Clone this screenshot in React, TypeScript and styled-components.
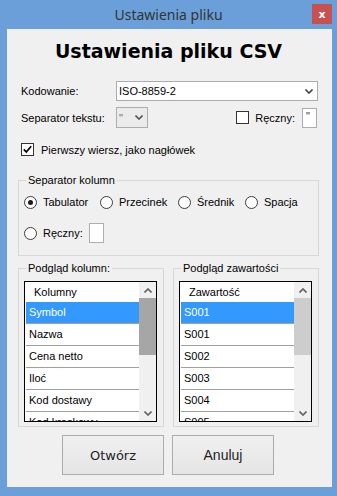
import React from 'react'
import styled, { createGlobalStyle } from 'styled-components'

const GlobalStyle = createGlobalStyle`
  html, body {
    margin: 0;
    padding: 0;
    background: #6b9fd9;
  }
  body {
    font-family: 'Liberation Sans', Arial, sans-serif;
    font-size: 11px;
    color: #000;
  }
`

const Window = styled.div`
  width: 337px;
  height: 496px;
  background: #6b9fd9;
  display: flex;
  flex-direction: column;
  box-sizing: border-box;
`

const TitleBar = styled.div`
  height: 29px;
  display: grid;
  grid-template-columns: 1fr auto 1fr;
  flex: none;
`

const TitleText = styled.div`
  grid-column: 2;
  align-self: center;
  margin-top: -1px;
  font-family: 'Noto Sans', 'Open Sans', sans-serif;
  font-size: 14px;
  color: #333;
`

const CloseButton = styled.div`
  grid-column: 3;
  justify-self: end;
  width: 20px;
  height: 20px;
  margin: 4px 5px 0 0;
  background: #c75050;
  color: #fff;
  display: flex;
  align-items: center;
  justify-content: center;
  font-family: 'DejaVu Sans', sans-serif;
  font-weight: 700;
  font-size: 11px;
  line-height: 1;
`

const Client = styled.div`
  flex: 1;
  margin: 0 5px 9px 7px;
  background: #f0f0f0;
  padding: 0 13px 0 11px;
  display: flex;
  flex-direction: column;
  min-height: 0;
`

const Heading = styled.h1`
  margin: 8px 0 0;
  height: 28px;
  line-height: 28px;
  text-align: center;
  font-family: 'DejaVu Sans', Verdana, sans-serif;
  font-weight: 700;
  font-size: 19px;
`

const FieldRow = styled.div<{ top: number; h: number }>`
  display: flex;
  align-items: center;
  margin-top: ${({ top }) => top}px;
  height: ${({ h }) => h}px;
  flex: none;
`

const FieldLabel = styled.span`
  width: 95px;
  padding-left: 3px;
  flex: none;
`

const Combo = styled.div<{ w: number; disabled?: boolean }>`
  width: ${({ w }) => w}px;
  height: 100%;
  box-sizing: border-box;
  border: 1px solid ${({ disabled }) => (disabled ? '#adadad' : '#abadb3')};
  background: ${({ disabled }) => (disabled ? '#ebebeb' : '#fff')};
  color: ${({ disabled }) => (disabled ? '#6d6d6d' : '#000')};
  display: flex;
  align-items: center;
  padding: 0 4px 0 2px;
  justify-content: space-between;
  flex: none;
`

const Spacer = styled.div<{ w?: number }>`
  flex: ${({ w }) => (w === undefined ? '1' : 'none')};
  width: ${({ w }) => (w === undefined ? 'auto' : `${w}px`)};
`

const CheckBox = styled.span`
  width: 13px;
  height: 13px;
  box-sizing: border-box;
  border: 1px solid #333;
  background: #fff;
  display: inline-flex;
  align-items: center;
  justify-content: center;
  flex: none;
`

const CheckLabel = styled.span<{ gap: number }>`
  margin-left: ${({ gap }) => gap}px;
`

const TextBox = styled.div<{ w: number; h: number }>`
  width: ${({ w }) => w}px;
  height: ${({ h }) => h}px;
  box-sizing: border-box;
  border: 1px solid #abadb3;
  background: #fff;
  color: #333;
  padding: 1px 0 0 3px;
  flex: none;
`

const Group = styled.div<{ h: number; top: number; w?: number }>`
  position: relative;
  box-sizing: border-box;
  border: 1px solid #d8d8d8;
  height: ${({ h }) => h}px;
  width: ${({ w }) => (w ? `${w}px` : 'auto')};
  margin-top: ${({ top }) => top}px;
  flex: none;
`

const Legend = styled.span`
  position: absolute;
  top: -8px;
  left: 7px;
  padding: 0 2px;
  line-height: 14px;
  background: #f0f0f0;
`

const RadioGrid = styled.div`
  display: grid;
  grid-template-columns: 76px 78px 67px auto;
  padding: 14px 0 0 5px;
  height: 14px;
  align-items: center;
`

const RadioItem = styled.label`
  display: flex;
  align-items: center;
  gap: 6px;
`

const RadioCircle = styled.span<{ on?: boolean }>`
  width: 13px;
  height: 13px;
  box-sizing: border-box;
  border-radius: 50%;
  border: 1px solid #3c3c3c;
  background: #fff;
  display: inline-flex;
  align-items: center;
  justify-content: center;
  flex: none;
  &::after {
    content: '';
    width: 5px;
    height: 5px;
    border-radius: 50%;
    background: ${({ on }) => (on ? '#1a1a1a' : 'transparent')};
  }
`

const ManualRow = styled.div`
  display: flex;
  align-items: center;
  padding-left: 5px;
  margin-top: 14px;
  height: 20px;
  gap: 6px;
`

const PreviewRow = styled.div`
  display: flex;
  gap: 9px;
  flex: none;
`

const Grid = styled.div`
  margin: 12px 0 0 5px;
  width: 133px;
  height: 141px;
  box-sizing: border-box;
  border: 1px solid #000;
  background: #fff;
  display: flex;
  overflow: hidden;
  padding-left: 1px;
`

const GridBody = styled.div`
  flex: 1;
  min-width: 0;
  display: flex;
  flex-direction: column;
`

const GridHeader = styled.div`
  height: 20px;
  flex: none;
  line-height: 20px;
  padding-left: 8px;
  background: #fff;
  color: #000;
`

const GridRow = styled.div<{ selected?: boolean }>`
  height: 22px;
  flex: none;
  box-sizing: border-box;
  line-height: 21px;
  padding-left: 3px;
  border-bottom: 1px solid #a0a0a0;
  background: ${({ selected }) => (selected ? '#3399ff' : '#fff')};
  color: ${({ selected }) => (selected ? '#fff' : '#000')};
  white-space: nowrap;
`

const ScrollBar = styled.div`
  width: 17px;
  flex: none;
  background: #f0f0f0;
  display: flex;
  flex-direction: column;
  align-items: center;
`

const ScrollArrow = styled.div`
  height: 16px;
  display: flex;
  align-items: center;
  justify-content: center;
  flex: none;
`

const Thumb = styled.div<{ dark?: boolean }>`
  width: 17px;
  height: 57px;
  background: ${({ dark }) => (dark ? '#a6a6a6' : '#cdcdcd')};
  flex: none;
`

const ButtonRow = styled.div`
  display: flex;
  justify-content: center;
  gap: 8px;
  margin-top: 8px;
  padding-right: 1px;
  flex: none;
`

const DialogButton = styled.button<{ verdana?: boolean }>`
  width: 102px;
  height: 40px;
  box-sizing: border-box;
  border: 1px solid #acacac;
  background: linear-gradient(#f0f0f0, #e5e5e5);
  font-family: ${({ verdana }) => (verdana ? "'DejaVu Sans', Verdana, sans-serif" : "'Liberation Sans', Arial, sans-serif")};
  font-size: ${({ verdana }) => (verdana ? '13px' : '14px')};
  color: #1e1e1e;
  padding: 0;
`

const Chevron = ({ up, color = '#444' }: { up?: boolean; color?: string }) => (
  <svg width='8' height='5' viewBox='0 0 8 5'>
    <path
      d={up ? 'M0.5 4.5 L4 1 L7.5 4.5' : 'M0.5 0.5 L4 4 L7.5 0.5'}
      fill='none'
      stroke={color}
      strokeWidth='1.6'
    />
  </svg>
)

const Tick = () => (
  <svg width='11' height='11' viewBox='0 0 11 11'>
    <path d='M1.8 5.4 L4.3 8 L9.2 2.2' fill='none' stroke='#000' strokeWidth='1.7' />
  </svg>
)

interface PreviewProps {
  title: string
  header: string
  rows: string[]
  darkThumb?: boolean
}

const Preview = ({ title, header, rows, darkThumb }: PreviewProps) => (
  <Group h={159} top={12} w={146}>
    <Legend>{title}</Legend>
    <Grid>
      <GridBody>
        <GridHeader>{header}</GridHeader>
        {rows.map((r, i) => (
          <GridRow key={i} selected={i === 0}>
            {r}
          </GridRow>
        ))}
      </GridBody>
      <ScrollBar>
        <ScrollArrow>
          <Chevron up color='#606060' />
        </ScrollArrow>
        <Thumb dark={darkThumb} />
        <Spacer />
        <ScrollArrow>
          <Chevron color='#606060' />
        </ScrollArrow>
      </ScrollBar>
    </Grid>
  </Group>
)

const separators = ['Tabulator', 'Przecinek', 'Średnik', 'Spacja']

export default function App() {
  return (
    <Window>
      <GlobalStyle />
      <TitleBar>
        <TitleText>Ustawienia pliku</TitleText>
        <CloseButton>x</CloseButton>
      </TitleBar>
      <Client>
        <Heading>Ustawienia pliku CSV</Heading>

        <FieldRow top={16} h={20}>
          <FieldLabel>Kodowanie:</FieldLabel>
          <Combo w={202}>
            <span>ISO-8859-2</span>
            <Chevron />
          </Combo>
        </FieldRow>

        <FieldRow top={6} h={21}>
          <FieldLabel>Separator tekstu:</FieldLabel>
          <Combo w={32} disabled>
            <span>"</span>
            <Chevron color='#555' />
          </Combo>
          <Spacer />
          <CheckBox />
          <CheckLabel gap={6}>Ręczny:</CheckLabel>
          <Spacer w={7} />
          <TextBox w={15} h={20}>"</TextBox>
          <Spacer w={2} />
        </FieldRow>

        <FieldRow top={15} h={13}>
          <Spacer w={3} />
          <CheckBox>
            <Tick />
          </CheckBox>
          <CheckLabel gap={7}>Pierwszy wiersz, jako nagłówek</CheckLabel>
        </FieldRow>

        <Group h={76} top={24}>
          <Legend>Separator kolumn</Legend>
          <RadioGrid>
            {separators.map((s, i) => (
              <RadioItem key={s}>
                <RadioCircle on={i === 0} />
                <span>{s}</span>
              </RadioItem>
            ))}
          </RadioGrid>
          <ManualRow>
            <RadioCircle />
            <span>Ręczny:</span>
            <TextBox w={15} h={20} />
          </ManualRow>
        </Group>

        <PreviewRow>
          <Preview
            title='Podgląd kolumn:'
            header='Kolumny'
            rows={['Symbol', 'Nazwa', 'Cena netto', 'Iloć', 'Kod dostawy', 'Kod kreskowy']}
            darkThumb
          />
          <Preview
            title='Podgląd zawartości'
            header='Zawartość'
            rows={['S001', 'S001', 'S002', 'S003', 'S004', 'S005']}
          />
        </PreviewRow>

        <ButtonRow>
          <DialogButton verdana>Otwórz</DialogButton>
          <DialogButton>Anuluj</DialogButton>
        </ButtonRow>
      </Client>
    </Window>
  )
}
